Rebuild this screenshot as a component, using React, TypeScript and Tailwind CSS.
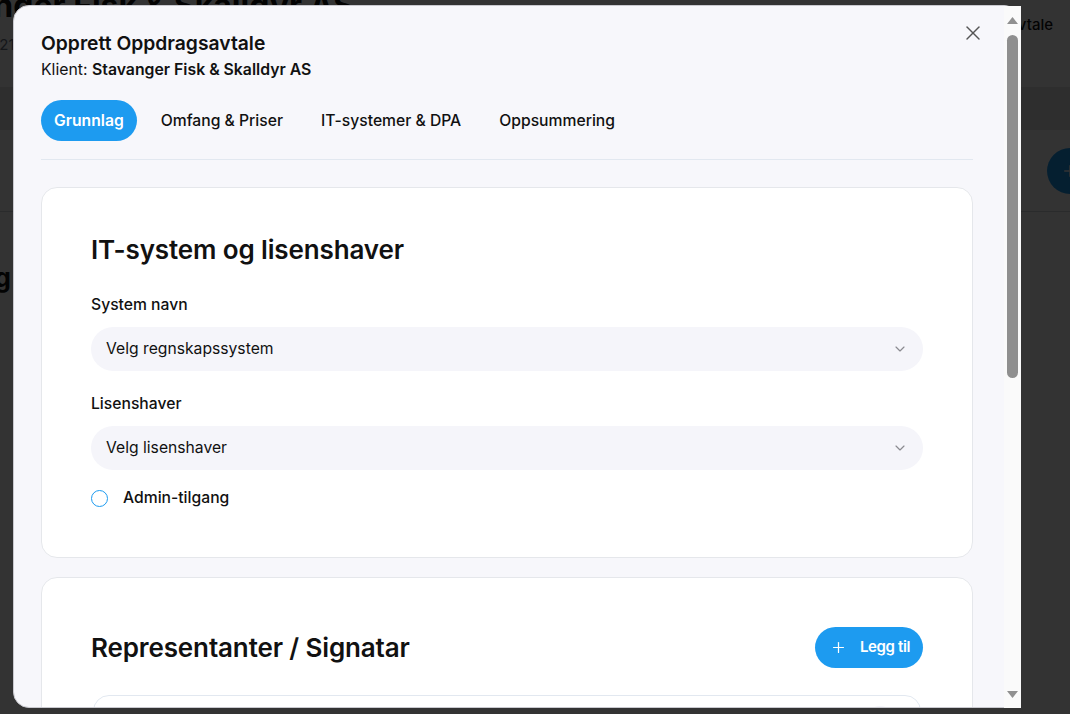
import React from 'react';
import { X, Plus, ChevronDown } from 'lucide-react';

const BackgroundPage: React.FC = () => {
  return (
    <div className="flex h-full flex-col bg-white text-[#111]">
      <div className="flex h-[87px] items-start justify-between pr-[17px]">
        <div className="-ml-[95px] -mt-[14px]">
          <div className="text-[32px] font-bold leading-10">Stavanger Fisk &amp; Skalldyr AS</div>
          <div className="ml-[85px] mt-2 text-[15px] leading-[22px] text-gray-500">921 345 678</div>
        </div>
        <div className="mt-[14px] text-[15px] font-medium">Ny oppdragsavtale</div>
      </div>
      <div className="h-[43px] bg-[#e6e6e6]" />
      <div className="flex h-[82px] items-center justify-end border-b border-gray-300">
        <div className="-mr-[23px] flex h-[46px] w-[46px] items-center justify-center rounded-full bg-[#1d9bf0] text-white">
          <Plus size={18} />
        </div>
      </div>
      <div className="-ml-[100px] mt-[48px]">
        <div className="text-[26px] font-bold leading-9">Oppdrag info</div>
        <div className="text-[15px] leading-[22px] text-gray-500">Fra kontrakt</div>
      </div>
    </div>
  );
};

const SelectBox: React.FC<{ text: string; className?: string }> = ({ text, className }) => (
  <div
    className={`flex h-11 items-center justify-between rounded-full bg-[#f5f5fa] pl-[15px] pr-[15px] text-[15.7px] text-[#111] ${className ?? ''}`}
  >
    <span>{text}</span>
    <ChevronDown size={16} strokeWidth={1.75} className="text-[#8a8a90]" />
  </div>
);

const Field: React.FC<{ label: string; text: string }> = ({ label, text }) => (
  <div>
    <div className="text-[15.7px] font-medium leading-[22px] text-[#111]">{label}</div>
    <div className="mt-[11px] flex h-11 items-center rounded-full bg-[#f5f5fa] px-[15px] text-[15.7px] text-[#8a8a90]">
      {text}
    </div>
  </div>
);

const Scrollbar: React.FC = () => (
  <div className="absolute bottom-0 right-[-1px] top-px flex w-[17px] flex-col items-center bg-[#fafafa] pb-[10px] pt-[11px]">
    <svg width="11" height="7" viewBox="0 0 11 7">
      <path d="M5.5 0 L11 7 L0 7 Z" fill="#909090" />
    </svg>
    <div className="mt-[11px] h-[343px] w-[11px] rounded-full bg-[#8f8f8f]" />
    <div className="flex-1" />
    <svg width="11" height="7" viewBox="0 0 11 7">
      <path d="M0 0 L11 0 L5.5 7 Z" fill="#909090" />
    </svg>
  </div>
);

const App: React.FC = () => {
  const tabs = ['Omfang & Priser', 'IT-systemer & DPA', 'Oppsummering'];

  return (
    <div className="relative h-screen w-full overflow-hidden font-['Inter',sans-serif]">
      <BackgroundPage />
      <div className="absolute inset-0 bg-black/80" />

      <div className="absolute left-[13px] top-[5px] h-[703px] w-[1007px]">
        <div className="h-full overflow-hidden rounded-2xl border border-[#c9c9cf] bg-[#f7f7fb]">
          <div className="pb-10 pl-[27px] pr-[46px] pt-[23px]">
            <h2 className="text-[19.3px] font-semibold leading-7 text-[#111]">Opprett Oppdragsavtale</h2>
            <p className="mt-0.5 text-[15.8px] leading-[22px] text-[#111]">
              Klient: <span className="font-semibold">Stavanger Fisk &amp; Skalldyr AS</span>
            </p>

            <div className="mt-[19px] flex items-center gap-[10px] border-b border-[#e2e8f0] pb-[18px]">
              <button className="h-[41px] rounded-full bg-[#1d9bf0] px-[13px] text-[15.7px] font-semibold text-white">
                Grunnlag
              </button>
              {tabs.map((t) => (
                <button key={t} className="h-[41px] rounded-full px-[14px] text-[15.7px] font-medium text-[#111]">
                  {t}
                </button>
              ))}
            </div>

            <div className="mt-[27px] rounded-2xl border border-[#e5e7eb] bg-white px-[49px] pb-[47px] pt-12">
              <h3 className="text-[26px] font-semibold leading-7 tracking-[-0.005em] text-[#111]">
                IT-system og lisenshaver
              </h3>
              <div className="mt-[30px] text-[15.7px] font-medium leading-[22px] text-[#111]">System navn</div>
              <SelectBox text="Velg regnskapssystem" className="mt-[11px]" />
              <div className="mt-[22px] text-[15.7px] font-medium leading-[22px] text-[#111]">Lisenshaver</div>
              <SelectBox text="Velg lisenshaver" className="mt-[11px]" />
              <div className="mt-4 flex h-6 items-center gap-[15px]">
                <span className="h-[17px] w-[17px] rounded-full border-[1.5px] border-[#1d9bf0] bg-white" />
                <span className="text-[15.7px] font-medium text-[#111]">Admin-tilgang</span>
              </div>
            </div>

            <div className="mt-[19px] rounded-2xl border border-[#e5e7eb] bg-white px-[49px] pb-12 pt-[49px]">
              <div className="flex items-center justify-between">
                <h3 className="text-[26px] font-semibold leading-7 tracking-[-0.005em] text-[#111]">
                  Representanter / Signatar
                </h3>
                <button className="flex h-[41px] items-center gap-[13px] rounded-full bg-[#1d9bf0] pl-[15px] pr-[13px] text-[15px] font-semibold tracking-tight text-white">
                  <Plus size={17} strokeWidth={1.75} />
                  Legg til
                </button>
              </div>

              <div className="mx-0.5 mt-[27px] rounded-2xl border border-[#e2e8f0] px-6 pb-6 pt-2.5">
                <div className="flex justify-end">
                  <span className="flex h-8 w-8 items-center justify-center rounded-full bg-[#f5f5fa] text-[#8a8a90]">
                    <X size={14} />
                  </span>
                </div>
                <div className="grid grid-cols-2 gap-5">
                  <Field label="Navn" text="Fullt navn" />
                  <Field label="E-post" text="navn@firma.no" />
                </div>
              </div>
            </div>
          </div>
        </div>

        <button className="absolute left-[948px] top-[16px] text-[#555]" aria-label="Lukk">
          <X size={24} strokeWidth={1.4} />
        </button>
        <Scrollbar />
      </div>
    </div>
  );
};

export default App;
